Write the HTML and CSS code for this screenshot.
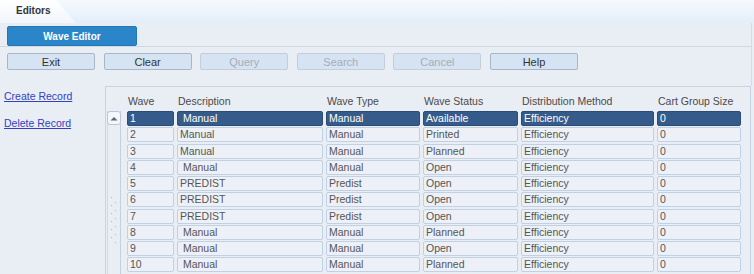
FILE: index.html
```html
<!DOCTYPE html>
<html lang="en">
<head>
    <meta charset="UTF-8">
    <meta name="viewport" content="width=device-width, initial-scale=1.0">
    <title>Editors - Wave Editor</title>
    <link rel="stylesheet" href="styles.css">
</head>
<body>
    <div class="tabbar">
        <div class="tab">Editors</div>
    </div>

    <div class="editor-strip">
        <div class="editor-title">Wave Editor</div>
    </div>

    <div class="actions">
        <button class="btn">Exit</button>
        <button class="btn">Clear</button>
        <button class="btn" disabled>Query</button>
        <button class="btn" disabled>Search</button>
        <button class="btn" disabled>Cancel</button>
        <button class="btn">Help</button>
    </div>

    <div class="main">
        <div class="links">
            <a href="#">Create Record</a>
            <a href="#">Delete Record</a>
        </div>

        <div class="grid-box">
            <div class="scrollbar">
                <div class="scroll-up">
                    <svg width="8" height="5" viewBox="0 0 8 5"><path d="M0.5 4.5 L4 1 L7.5 4.5 Z" fill="#5a6675"/></svg>
                </div>
                <svg class="grip" width="8" height="50" viewBox="0 0 8 50">
                    <g fill="#aab6c4">
                        <rect x="1" y="1" width="1" height="1"/><rect x="5" y="6" width="1" height="1"/>
                        <rect x="1" y="9" width="1" height="1"/><rect x="5" y="14" width="1" height="1"/>
                        <rect x="1" y="17" width="1" height="1"/><rect x="5" y="22" width="1" height="1"/>
                        <rect x="1" y="25" width="1" height="1"/><rect x="5" y="30" width="1" height="1"/>
                        <rect x="1" y="33" width="1" height="1"/><rect x="5" y="38" width="1" height="1"/>
                        <rect x="1" y="41" width="1" height="1"/><rect x="5" y="46" width="1" height="1"/>
                    </g>
                </svg>
            </div>

            <div class="table">
                <div class="th">Wave</div>
                <div class="th">Description</div>
                <div class="th">Wave Type</div>
                <div class="th">Wave Status</div>
                <div class="th">Distribution Method</div>
                <div class="th">Cart Group Size</div>

                <div class="td sel">1</div><div class="td sel"> Manual</div><div class="td sel">Manual</div><div class="td sel">Available</div><div class="td sel">Efficiency</div><div class="td sel">0</div>
                <div class="td">2</div><div class="td">Manual</div><div class="td">Manual</div><div class="td">Printed</div><div class="td">Efficiency</div><div class="td">0</div>
                <div class="td">3</div><div class="td">Manual</div><div class="td">Manual</div><div class="td">Planned</div><div class="td">Efficiency</div><div class="td">0</div>
                <div class="td">4</div><div class="td"> Manual</div><div class="td">Manual</div><div class="td">Open</div><div class="td">Efficiency</div><div class="td">0</div>
                <div class="td">5</div><div class="td">PREDIST</div><div class="td">Predist</div><div class="td">Open</div><div class="td">Efficiency</div><div class="td">0</div>
                <div class="td">6</div><div class="td">PREDIST</div><div class="td">Predist</div><div class="td">Open</div><div class="td">Efficiency</div><div class="td">0</div>
                <div class="td">7</div><div class="td">PREDIST</div><div class="td">Predist</div><div class="td">Open</div><div class="td">Efficiency</div><div class="td">0</div>
                <div class="td">8</div><div class="td"> Manual</div><div class="td">Manual</div><div class="td">Planned</div><div class="td">Efficiency</div><div class="td">0</div>
                <div class="td">9</div><div class="td"> Manual</div><div class="td">Manual</div><div class="td">Open</div><div class="td">Efficiency</div><div class="td">0</div>
                <div class="td">10</div><div class="td"> Manual</div><div class="td">Manual</div><div class="td">Planned</div><div class="td">Efficiency</div><div class="td">0</div>
            </div>
        </div>
    </div>
</body>
</html>
```

FILE: styles.css
```css
body {
    margin: 0;
    padding: 0;
    font-family: "Liberation Sans", Arial, sans-serif;
    background-color: #e9eef5;
    color: #444;
    overflow: hidden;
}
.tabbar {
    height: 23px;
    background: linear-gradient(to bottom, #f6f9fd, #e3eefa);
}
.tab {
    width: 76px;
    height: 23px;
    box-sizing: border-box;
    padding: 5px 0 0 16px;
    background: linear-gradient(to bottom, #ffffff, #f2f6fb);
    clip-path: polygon(0 0, 56px 0, 76px 23px, 0 23px);
    font-size: 10px;
    font-weight: bold;
    color: #333;
}
.editor-strip {
    height: 20px;
    padding: 3px 0 0 7px;
    border-bottom: 1px solid #cdd8e5;
    border-right: 1px solid #d3dce7;
    width: 744px;
}
.editor-title {
    width: 130px;
    height: 20px;
    box-sizing: border-box;
    line-height: 19px;
    text-align: center;
    background: #2b85c9;
    border: 1px solid #2576b4;
    border-radius: 2px;
    color: white;
    font-size: 10px;
    font-weight: bold;
}
.actions {
    display: flex;
    gap: 8.6px;
    padding: 6px 0 0 7px;
    height: 33px;
    border-right: 1px solid #d3dce7;
    width: 744px;
}
.btn {
    width: 88px;
    height: 17px;
    padding: 0;
    font-family: "Liberation Sans", Arial, sans-serif;
    font-size: 11px;
    color: #333;
    background: #d5e3f2;
    border: 1px solid #a7b7ca;
    border-radius: 2px;
    cursor: pointer;
}
.btn:disabled {
    color: #a5adb7;
    border-color: #c2cedb;
    cursor: default;
}
.main {
    display: flex;
}
.links {
    width: 105px;
    flex-shrink: 0;
    display: flex;
    flex-direction: column;
    gap: 15px;
    padding: 4px 0 0 4px;
    box-sizing: border-box;
}
.links a {
    font-size: 10.5px;
    line-height: 12px;
    color: #3340bf;
}
.grid-box {
    display: flex;
    width: 646px;
    height: 200px;
    box-sizing: border-box;
    border: 1px solid #c6d3e2;
    border-bottom: none;
    padding-left: 1px;
}
.scrollbar {
    width: 14px;
    margin-top: 24px;
    box-sizing: border-box;
    border-left: 1px solid #d0dae6;
    border-right: 1px solid #c2cfde;
    display: flex;
    flex-direction: column;
    align-items: center;
}
.scroll-up {
    width: 14px;
    height: 14px;
    box-sizing: border-box;
    margin-left: -1px;
    background: #f3f6fa;
    border: 1px solid #b9c6d6;
    border-radius: 3px;
    display: flex;
    align-items: center;
    justify-content: center;
}
.grip {
    margin-top: 71px;
}
.table {
    display: grid;
    grid-template-columns: 47px 146px 94px 95px 133px 84px;
    grid-template-rows: 22.75px;
    grid-auto-rows: 15px;
    column-gap: 3px;
    row-gap: 1.25px;
    margin-left: 6px;
    font-size: 10.5px;
}
.th {
    padding: 8px 0 0 1px;
    line-height: 12px;
    color: #4a4a4a;
}
.td {
    box-sizing: border-box;
    border: 1px solid #c0d1e4;
    border-radius: 2px;
    background: #edf1f7;
    padding-left: 2px;
    line-height: 13px;
    color: #555;
    white-space: pre;
}
.td.sel {
    background: #355b8a;
    border-color: #2c4c75;
    color: #fff;
}
```
